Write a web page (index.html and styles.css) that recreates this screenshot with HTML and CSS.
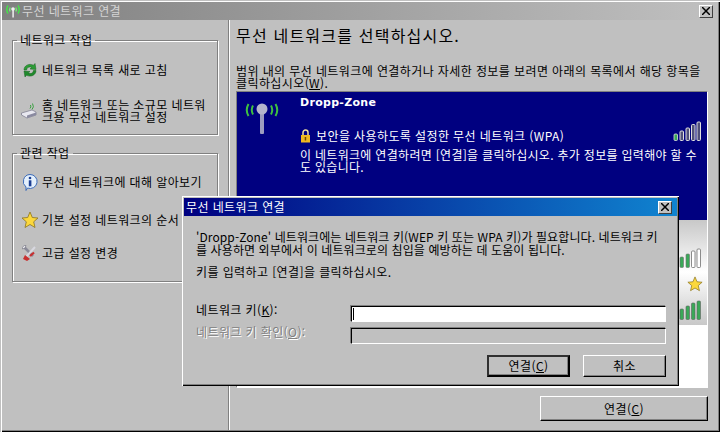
FILE: index.html
```html
<!DOCTYPE html>
<html lang="ko">
<head>
    <meta charset="UTF-8">
    <title>무선 네트워크 연결</title>
    <link rel="stylesheet" href="styles.css">
</head>
<body>
    <div class="window">
        <div class="titlebar">
            <svg class="title-icon" width="16" height="16" viewBox="0 0 16 16" fill="none">
                <path d="M3 2.500 Q0.500 6.500 3 10.500 M13 2.500 Q15.500 6.500 13 10.500" stroke="#46e04a" stroke-width="1.500"/>
                <path d="M5.200 4.500 Q4 6.500 5.200 8.500 M10.800 4.500 Q12 6.500 10.800 8.500" stroke="#70f070" stroke-width="1.300"/>
                <rect x="7.300" y="6" width="1.600" height="8.500" fill="#e8e8e8"/>
                <circle cx="8" cy="6" r="1.800" fill="#f0f0f0"/>
            </svg>
            <span class="title-text">무선 네트워크 연결</span>
            <button class="close-btn">
                <svg width="8" height="8" viewBox="0 0 8 8"><path d="M0 0 L8 8 M8 0 L0 8" stroke="#000" stroke-width="1.5"/></svg>
            </button>
        </div>
        <div class="window-body">
            <aside class="sidebar">
                <fieldset class="group group-tasks">
                    <legend>네트워크 작업</legend>
                    <div class="task task-first">
                        <svg class="task-icon" width="18" height="18" viewBox="0 0 18 18" fill="none">
                            <path d="M3 9 C3 4.500 8 2 12.500 4.200 L14 2.500 L15 8.500 L9 8 L10.800 6.400 C8 5.200 5.800 6.500 5.600 9 Z" fill="#2c9c36" stroke="#14601c" stroke-width=".5"/>
                            <path d="M15 9.500 C15 14 10 16.500 5.500 14.300 L4 16 L3 10 L9 10.500 L7.200 12.100 C10 13.300 12.200 12 12.400 9.500 Z" fill="#1f8a2c" stroke="#14601c" stroke-width=".5"/>
                        </svg>
                        <span>네트워크 목록 새로 고침</span>
                    </div>
                    <div class="task task-wide">
                        <svg class="task-icon" width="18" height="18" viewBox="0 0 18 18" fill="none">
                            <path d="M0.500 11 L11 8 L15 10 L15 13 L6 16 L0.500 13 Z" fill="#e8e8f0" stroke="#6a6a80" stroke-width=".6"/>
                            <path d="M6 13.500 L15 10.500 L15 13 L6 16 Z" fill="#8a8aa0"/>
                            <path d="M9 6.500 Q10.500 5 9.500 3 M11 7.500 Q13.500 5 11.500 1.500" stroke="#3aa040" stroke-width="1"/>
                        </svg>
                        <span>홈 네트워크 또는 소규모 네트워크용 무선 네트워크 설정</span>
                    </div>
                </fieldset>
                <fieldset class="group group-related">
                    <legend>관련 작업</legend>
                    <div class="task task-info">
                        <svg class="task-icon" width="18" height="18" viewBox="0 0 18 18">
                            <path d="M9 1.500 A7 7 0 1 1 6.500 15 L5 17.500 L5 14 A7 7 0 0 1 9 1.500 Z" fill="#e4f0fc" stroke="#3a6ab8"/>
                            <circle cx="9" cy="5" r="1.300" fill="#1c3f94"/>
                            <rect x="7.800" y="7.300" width="2.600" height="6" fill="#1c3f94"/>
                        </svg>
                        <span>무선 네트워크에 대해 알아보기</span>
                    </div>
                    <div class="task task-star">
                        <svg class="task-icon" width="18" height="18" viewBox="0 0 18 18">
                            <path d="M9 1 L11.300 6.500 L17 7 L12.700 10.800 L14 16.500 L9 13.500 L4 16.500 L5.300 10.800 L1 7 L6.700 6.500 Z" fill="#fcd83c" stroke="#8a7420" stroke-width=".8"/>
                        </svg>
                        <span>기본 설정 네트워크의 순서</span>
                    </div>
                    <div class="task task-tools">
                        <svg class="task-icon" width="18" height="18" viewBox="0 0 18 18" fill="none">
                            <path d="M3 3 L12 12" stroke="#8a8a98" stroke-width="2.600"/>
                            <path d="M1.500 5 A3 3 0 0 1 5 1.500 L4 4 Z" fill="#f0f0f4" stroke="#6a6a78" stroke-width=".6"/>
                            <path d="M14 3 L5 13" stroke="#d8d8e0" stroke-width="2"/>
                            <path d="M4 11 L9 15 L6 17 L2 15 Z" fill="#c83030"/>
                            <path d="M9 12 L13 8.500" stroke="#c83030" stroke-width="2.200"/>
                        </svg>
                        <span>고급 설정 변경</span>
                    </div>
                </fieldset>
            </aside>
            <main class="content">
                <h1>무선 네트워크를 선택하십시오.</h1>
                <p class="intro">범위 내의 무선 네트워크에 연결하거나 자세한 정보를 보려면 아래의 목록에서 해당 항목을 클릭하십시오(<u>W</u>).</p>
                <div class="network-list">
                    <div class="network selected">
                        <svg class="antenna" width="36" height="32" viewBox="0 0 36 32" fill="none">
                            <path d="M3.500 1 Q0 7 3.500 13 M30.500 1 Q34 7 30.500 13" stroke="#3fc040" stroke-width="2"/>
                            <path d="M8 2.500 Q5.500 7 8 11.500 M26 2.500 Q28.500 7 26 11.500" stroke="#3fc040" stroke-width="2"/>
                            <rect x="15" y="8" width="4" height="23" rx="1" fill="#9c9cc0"/>
                            <circle cx="17" cy="6" r="5.500" fill="#b4b4cc"/>
                        </svg>
                        <div class="network-name">Dropp-Zone</div>
                        <div class="network-status">
                            <svg width="11" height="14" viewBox="0 0 11 14" fill="none">
                                <path d="M3 6 V3.500 A2.500 2.500 0 0 1 8 3.500 V6" stroke="#f0e0a0" stroke-width="1.500"/>
                                <rect x="1" y="6" width="9" height="7.500" fill="#f0b820"/>
                                <rect x="4.700" y="8" width="1.500" height="3.500" fill="#704800"/>
                            </svg>
                            <span>보안을 사용하도록 설정한 무선 네트워크 (WPA)</span>
                        </div>
                        <svg class="bars" width="28" height="20" viewBox="0 0 28 20"><use href="#bars-one"/></svg>
                        <p class="network-desc">이 네트워크에 연결하려면 [연결]을 클릭하십시오. 추가 정보를 입력해야 할 수도 있습니다.</p>
                    </div>
                    <div class="network plain fade-down">
                        <svg class="bars" width="28" height="20" viewBox="0 0 28 20"><use href="#bars-three"/></svg>
                    </div>
                    <div class="network plain fade-up">
                        <svg class="star" width="16" height="16" viewBox="0 0 18 18">
                            <path d="M9 1 L11.300 6.500 L17 7 L12.700 10.800 L14 16.500 L9 13.500 L4 16.500 L5.300 10.800 L1 7 L6.700 6.500 Z" fill="#fcd83c" stroke="#8a7420" stroke-width=".8"/>
                        </svg>
                        <svg class="bars" width="28" height="20" viewBox="0 0 28 20"><use href="#bars-four"/></svg>
                    </div>
                </div>
                <div class="actions">
                    <button class="btn btn-main">연결(<u>C</u>)</button>
                </div>
            </main>
        </div>

        <div class="dialog">
            <div class="dialog-title">
                <span>무선 네트워크 연결</span>
                <button class="close-btn">
                    <svg width="8" height="8" viewBox="0 0 8 8"><path d="M0 0 L8 8 M8 0 L0 8" stroke="#000" stroke-width="1.5"/></svg>
                </button>
            </div>
            <div class="dialog-body">
                <p class="dialog-msg">'Dropp-Zone' 네트워크에는 네트워크 키(WEP 키 또는 WPA 키)가 필요합니다. 네트워크 키를 사용하면 외부에서 이 네트워크로의 침입을 예방하는 데 도움이 됩니다.</p>
                <p class="dialog-hint">키를 입력하고 [연결]을 클릭하십시오.</p>
                <div class="form-row">
                    <label class="field-label">네트워크 키(<u>K</u>):</label>
                    <div class="field"><span class="caret"></span></div>
                </div>
                <div class="form-row">
                    <label class="field-label disabled">네트워크 키 확인(<u>O</u>):</label>
                    <div class="field field-off"></div>
                </div>
                <div class="dialog-buttons">
                    <button class="btn btn-default">연결(<u>C</u>)</button>
                    <button class="btn">취소</button>
                </div>
            </div>
        </div>
    </div>

    <svg class="defs" width="0" height="0">
        <defs>
            <g id="bars-one">
                <rect x="1" y="13" width="3.500" height="6.500" rx="1" fill="#3aa858" stroke="#e0e0e0" stroke-width=".8"/>
                <rect x="7" y="10" width="3.500" height="9.500" rx="1" fill="#50507a" stroke="#e0e0e0"/>
                <rect x="13" y="7" width="3.500" height="12.500" rx="1" fill="#50507a" stroke="#e0e0e0"/>
                <rect x="18.500" y="3.500" width="3.500" height="16" rx="1" fill="#50507a" stroke="#e0e0e0"/>
                <rect x="24" y="1" width="3.500" height="18.500" rx="1" fill="#50507a" stroke="#e0e0e0"/>
            </g>
            <g id="bars-three">
                <rect x="7" y="9" width="3.500" height="10.500" rx="1" fill="#3aa858" stroke="#707070" stroke-width=".6"/>
                <rect x="13" y="6" width="3.500" height="13.500" rx="1" fill="#3aa858" stroke="#707070" stroke-width=".6"/>
                <rect x="18.500" y="3" width="3.500" height="16.500" rx="1" fill="#fff" stroke="#707070" stroke-width=".8"/>
                <rect x="24" y="1" width="3.500" height="18.500" rx="1" fill="#fff" stroke="#707070" stroke-width=".8"/>
            </g>
            <g id="bars-four">
                <rect x="7" y="9" width="3.500" height="10.500" rx="1" fill="#3aa858" stroke="#606060" stroke-width=".6"/>
                <rect x="13" y="6" width="3.500" height="13.500" rx="1" fill="#3aa858" stroke="#606060" stroke-width=".6"/>
                <rect x="18.500" y="3" width="3.500" height="16.500" rx="1" fill="#3aa858" stroke="#606060" stroke-width=".6"/>
                <rect x="24" y="1" width="3.500" height="18.500" rx="1" fill="#3aa858" stroke="#606060" stroke-width=".6"/>
            </g>
        </defs>
    </svg>
</body>
</html>
```

FILE: styles.css
```css
html, body {
    margin: 0;
    padding: 0;
}
body {
    width: 720px;
    height: 432px;
    overflow: hidden;
    background: #c0c0c0;
    font-family: "Noto Sans CJK KR", "Liberation Sans", sans-serif;
    font-size: 12px;
    line-height: 12px;
    letter-spacing: 0.4px;
    color: #000;
}
p, h1 {
    margin: 0;
}
.defs {
    display: block;
    height: 0;
}
.window {
    position: relative;
    box-sizing: border-box;
    width: 720px;
    height: 432px;
    padding: 2px;
    background: #c0c0c0;
    box-shadow: inset 1px 1px 0 #c0c0c0, inset 2px 2px 0 #fff, inset -1px -1px 0 #000, inset -2px -2px 0 #808080;
    display: flex;
    flex-direction: column;
}
.titlebar {
    height: 18px;
    flex: none;
    display: flex;
    align-items: center;
    padding: 0 5px 0 3px;
    background: linear-gradient(90deg, #808080, #c0c0c0);
    color: #d4d4d4;
}
.title-icon {
    margin-right: 1px;
}
.title-text {
    flex: 1;
}
.close-btn {
    width: 14px;
    height: 13px;
    padding: 0;
    display: flex;
    align-items: center;
    justify-content: center;
    background: #c0c0c0;
    border: 1px solid;
    border-color: #fff #404040 #404040 #fff;
}
.window-body {
    flex: 1;
    display: flex;
    min-height: 0;
}
.sidebar {
    box-sizing: border-box;
    width: 227px;
    flex: none;
    padding: 14px 10px 0 10px;
    border-right: 1px solid #808080;
}
.group {
    box-sizing: border-box;
    margin: 0;
    padding: 0;
    border: 1px solid #808080;
    box-shadow: 1px 1px 0 #fff, inset 1px 1px 0 #fff;
    min-inline-size: 0;
}
.group legend {
    margin-left: 4px;
    padding: 0 3px;
}
.group-tasks {
    height: 101px;
    margin-bottom: 12px;
}
.group-related {
    height: 135px;
}
.task {
    display: flex;
    align-items: center;
    gap: 3px;
    padding-left: 8px;
}
.task-icon {
    flex: none;
}
.task-first {
    margin-top: 15px;
}
.task-wide {
    margin-top: 20px;
}
.task-info {
    margin-top: 14px;
}
.task-star {
    margin-top: 20px;
}
.task-tools {
    margin-top: 15px;
}
.content {
    flex: 1;
    min-width: 0;
    padding: 0 10px 0 6px;
    border-left: 1px solid #fff;
    display: flex;
    flex-direction: column;
}
h1 {
    font-size: 16px;
    font-weight: 400;
    line-height: 20px;
    letter-spacing: 1.2px;
    margin-top: 5px;
}
.intro {
    margin-top: 20px;
    height: 26px;
    line-height: 12px;
}
.network-list {
    box-sizing: border-box;
    height: 297px;
    background: #fff;
    border: 1px solid;
    border-color: #808080 #fff #fff #808080;
    flex: none;
}
.network {
    position: relative;
    box-sizing: border-box;
}
.selected {
    height: 128px;
    background: #000080;
    color: #fff;
    padding: 5px 2px 0 63px;
}
.antenna {
    position: absolute;
    left: 8px;
    top: 11px;
}
.network-name {
    font-family: "DejaVu Sans", sans-serif;
    font-size: 11px;
    font-weight: 700;
    letter-spacing: 0.3px;
}
.network-status {
    display: flex;
    align-items: center;
    gap: 5px;
    margin-top: 20px;
}
.network-desc {
    margin-top: 6px;
    letter-spacing: 0.3px;
}
.bars {
    position: absolute;
    right: 6px;
}
.selected .bars {
    top: 29px;
}
.plain {
    height: 52px;
}
.plain .bars {
    bottom: 4px;
}
.fade-down {
    background: linear-gradient(180deg, #c8c8c8, #fff);
}
.fade-up {
    background: linear-gradient(180deg, #fff, #c8c8c8);
    height: 53px;
}
.fade-up .bars {
    bottom: 5px;
}
.star {
    position: absolute;
    right: 4px;
    top: 4px;
}
.actions {
    flex: none;
    margin-top: 8px;
    display: flex;
    justify-content: flex-end;
}
.btn {
    box-sizing: border-box;
    width: 83px;
    height: 22px;
    padding: 0;
    font: inherit;
    letter-spacing: inherit;
    color: #000;
    background: #c0c0c0;
    border: 1px solid;
    border-color: #fff #000 #000 #fff;
    box-shadow: inset -1px -1px 0 #808080;
}
.btn-main {
    width: 168px;
    height: 25px;
}
.btn-default {
    border: 2px solid #000;
    border-color: #303030 #000 #000 #303030;
}
.dialog {
    position: absolute;
    left: 182px;
    top: 196px;
    box-sizing: border-box;
    width: 497px;
    height: 190px;
    padding: 2px;
    background: #c0c0c0;
    box-shadow: inset 1px 1px 0 #fff, inset -1px -1px 0 #000, inset -2px -2px 0 #808080;
    display: flex;
    flex-direction: column;
}
.dialog-title {
    height: 18px;
    flex: none;
    display: flex;
    align-items: center;
    justify-content: space-between;
    padding: 0 5px 0 2px;
    background: linear-gradient(90deg, #000080, #1084d0);
    color: #fff;
}
.dialog-body {
    flex: 1;
    padding: 15px 11px 0 12px;
}
.dialog-msg {
    height: 25px;
    line-height: 12.5px;
    letter-spacing: 0.1px;
}
.dialog-hint {
    margin-top: 10px;
}
.form-row {
    display: flex;
    align-items: center;
    justify-content: space-between;
    height: 16px;
    margin-bottom: 6px;
}
.dialog-hint + .form-row {
    margin-top: 28px;
}
.field-label {
    margin-bottom: 9px;
}
.field {
    box-sizing: border-box;
    width: 315px;
    height: 16px;
    background: #fff;
    border: 1px solid;
    border-color: #000 #fff #fff #000;
    box-shadow: -1px -1px 0 #808080;
    display: flex;
    align-items: center;
    padding-left: 1px;
}
.field-off {
    background: #c0c0c0;
}
.caret {
    width: 1px;
    height: 12px;
    background: #000;
}
.disabled {
    color: #808080;
    text-shadow: 1px 1px 0 #fff;
}
.dialog-buttons {
    display: flex;
    justify-content: flex-end;
    gap: 13px;
    margin-top: 11px;
}
```
